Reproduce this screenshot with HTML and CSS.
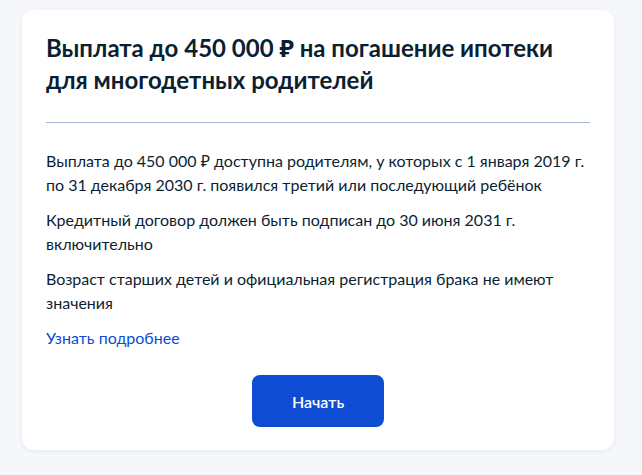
FILE: index.html
```html
<!DOCTYPE html>
<html lang="ru">
<head>
<meta charset="utf-8">
<link rel="stylesheet" href="styles.css">
</head>
<body>
<main class="page">
  <section class="card">
    <h1 class="title">Выплата до 450 000 ₽ на погашение ипотеки для многодетных родителей</h1>
    <hr class="divider">
    <p class="text">Выплата до 450 000 ₽ доступна родителям, у которых с 1 января 2019 г. по 31 декабря 2030 г. появился третий или последующий ребёнок</p>
    <p class="text">Кредитный договор должен быть подписан до 30 июня 2031 г. включительно</p>
    <p class="text">Возраст старших детей и официальная регистрация брака не имеют значения</p>
    <a class="link" href="#">Узнать подробнее</a>
    <div class="actions">
      <button class="btn" type="button">Начать</button>
    </div>
  </section>
</main>
</body>
</html>
```

FILE: styles.css
```css
* { box-sizing: border-box; }
html, body { margin: 0; padding: 0; }
body {
  background: #f5f7fb;
  font-family: Lato, "Noto Sans", sans-serif;
  color: #0b1f33;
  width: 642px;
  height: 475px;
  overflow: hidden;
}
.page {
  padding: 10px 28px 0 22px;
}
.card {
  background: #fff;
  border-radius: 12px;
  box-shadow: 0 1px 4px rgba(26, 70, 140, 0.08);
  padding: 22px 24px 23px;
  display: flex;
  flex-direction: column;
}
.title {
  margin: 0;
  font-size: 24px;
  line-height: 32px;
  font-weight: 700;
}
.divider {
  flex: none;
  margin: 26px 0 26px;
  border: 0;
  height: 1px;
  background: #a7b5d4;
}
.text {
  margin: 0 0 11px;
  font-size: 16px;
  line-height: 24px;
}
.link {
  font-size: 16px;
  line-height: 24px;
  color: #0d4cd3;
  text-decoration: none;
  align-self: flex-start;
}
.actions {
  display: flex;
  justify-content: center;
  margin-top: 25px;
}
.btn {
  width: 132px;
  height: 52px;
  border: 0;
  border-radius: 8px;
  background: #0d4cd3;
  color: #fff;
  font-family: Lato, "Noto Sans", sans-serif;
  font-size: 16px;
  font-weight: 600;
}
```
